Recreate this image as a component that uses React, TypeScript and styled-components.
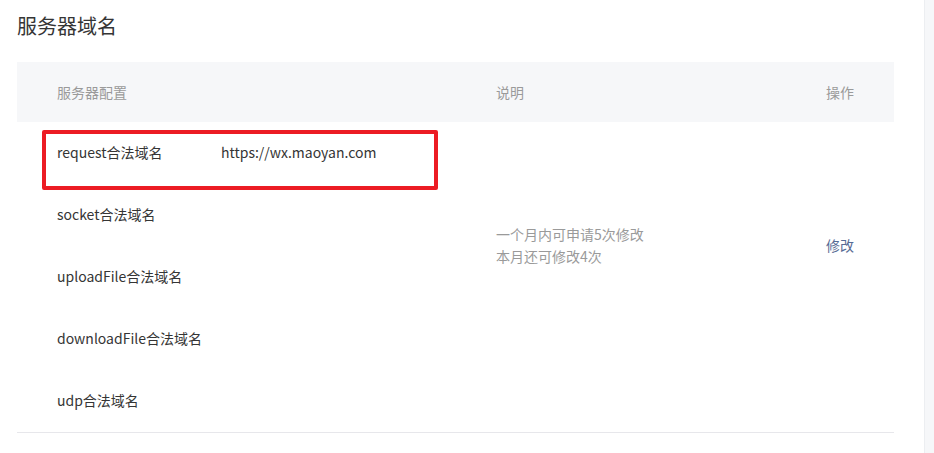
import React from "react";
import styled, { createGlobalStyle } from "styled-components";

const Global = createGlobalStyle`
  html, body { margin: 0; padding: 0; background: #fff; }
  body { font-family: "Noto Sans CJK SC", "Noto Sans", sans-serif; }
`;

const Page = styled.div`
  display: flex;
  width: 934px;
  height: 453px;
  overflow: hidden;
`;

const Main = styled.div`
  width: 924px;
  padding: 11px 30px 0 17px;
  box-sizing: border-box;
`;

const SideStrip = styled.div`
  flex: 1;
  background: #f6f7f9;
  border-left: 1px solid #eceef1;
`;

const Title = styled.h2`
  margin: 0 0 21px;
  font-size: 20px;
  font-weight: 400;
  line-height: 30px;
  color: #353535;
`;

const Table = styled.div`
  display: grid;
  grid-template-columns: 479px 1fr auto;
  grid-template-rows: 60px repeat(5, 62px);
  border-bottom: 1px solid #e7e7eb;
  font-size: 14px;
  color: #353535;
`;

const HeadCell = styled.div<{ $first?: boolean; $last?: boolean }>`
  background: #f6f7f9;
  color: #9a9a9a;
  display: flex;
  align-items: center;
  padding-left: ${(p) => (p.$first ? "40px" : "0")};
  padding-right: ${(p) => (p.$last ? "40px" : "0")};
  padding-bottom: 1px;
`;

const NameCell = styled.div<{ $row: number }>`
  grid-column: 1;
  grid-row: ${(p) => p.$row};
  display: flex;
  align-items: center;
  padding-left: 40px;
  padding-bottom: 2px;
  position: relative;
`;

const Label = styled.span`
  width: 164px;
  flex-shrink: 0;
`;

const Value = styled.span``;

const Highlight = styled.div`
  position: absolute;
  left: 25px;
  top: 8px;
  width: 396px;
  height: 60px;
  box-sizing: border-box;
  border: 4px solid #ec1c24;
  border-radius: 2px;
`;

const DescCell = styled.div`
  grid-column: 2;
  grid-row: 2 / span 4;
  display: flex;
  flex-direction: column;
  justify-content: center;
  color: #9a9a9a;
  line-height: 22px;
  padding-bottom: 3px;
`;

const ActionCell = styled.div`
  grid-column: 3;
  grid-row: 2 / span 4;
  display: flex;
  align-items: center;
  padding-right: 40px;
  padding-bottom: 3px;
`;

const Link = styled.a`
  color: #576b95;
  text-decoration: none;
  cursor: pointer;
`;

const rows = [
  "request合法域名",
  "socket合法域名",
  "uploadFile合法域名",
  "downloadFile合法域名",
  "udp合法域名",
];

export default function App() {
  return (
    <>
      <Global />
      <Page>
        <Main>
          <Title>服务器域名</Title>
          <Table>
            <HeadCell $first>服务器配置</HeadCell>
            <HeadCell>说明</HeadCell>
            <HeadCell $last>操作</HeadCell>
            {rows.map((r, i) => (
              <NameCell key={r} $row={i + 2}>
                <Label>{r}</Label>
                {i === 0 && <Value>https://wx.maoyan.com</Value>}
                {i === 0 && <Highlight />}
              </NameCell>
            ))}
            <DescCell>
              <span>一个月内可申请5次修改</span>
              <span>本月还可修改4次</span>
            </DescCell>
            <ActionCell>
              <Link>修改</Link>
            </ActionCell>
          </Table>
        </Main>
        <SideStrip />
      </Page>
    </>
  );
}
